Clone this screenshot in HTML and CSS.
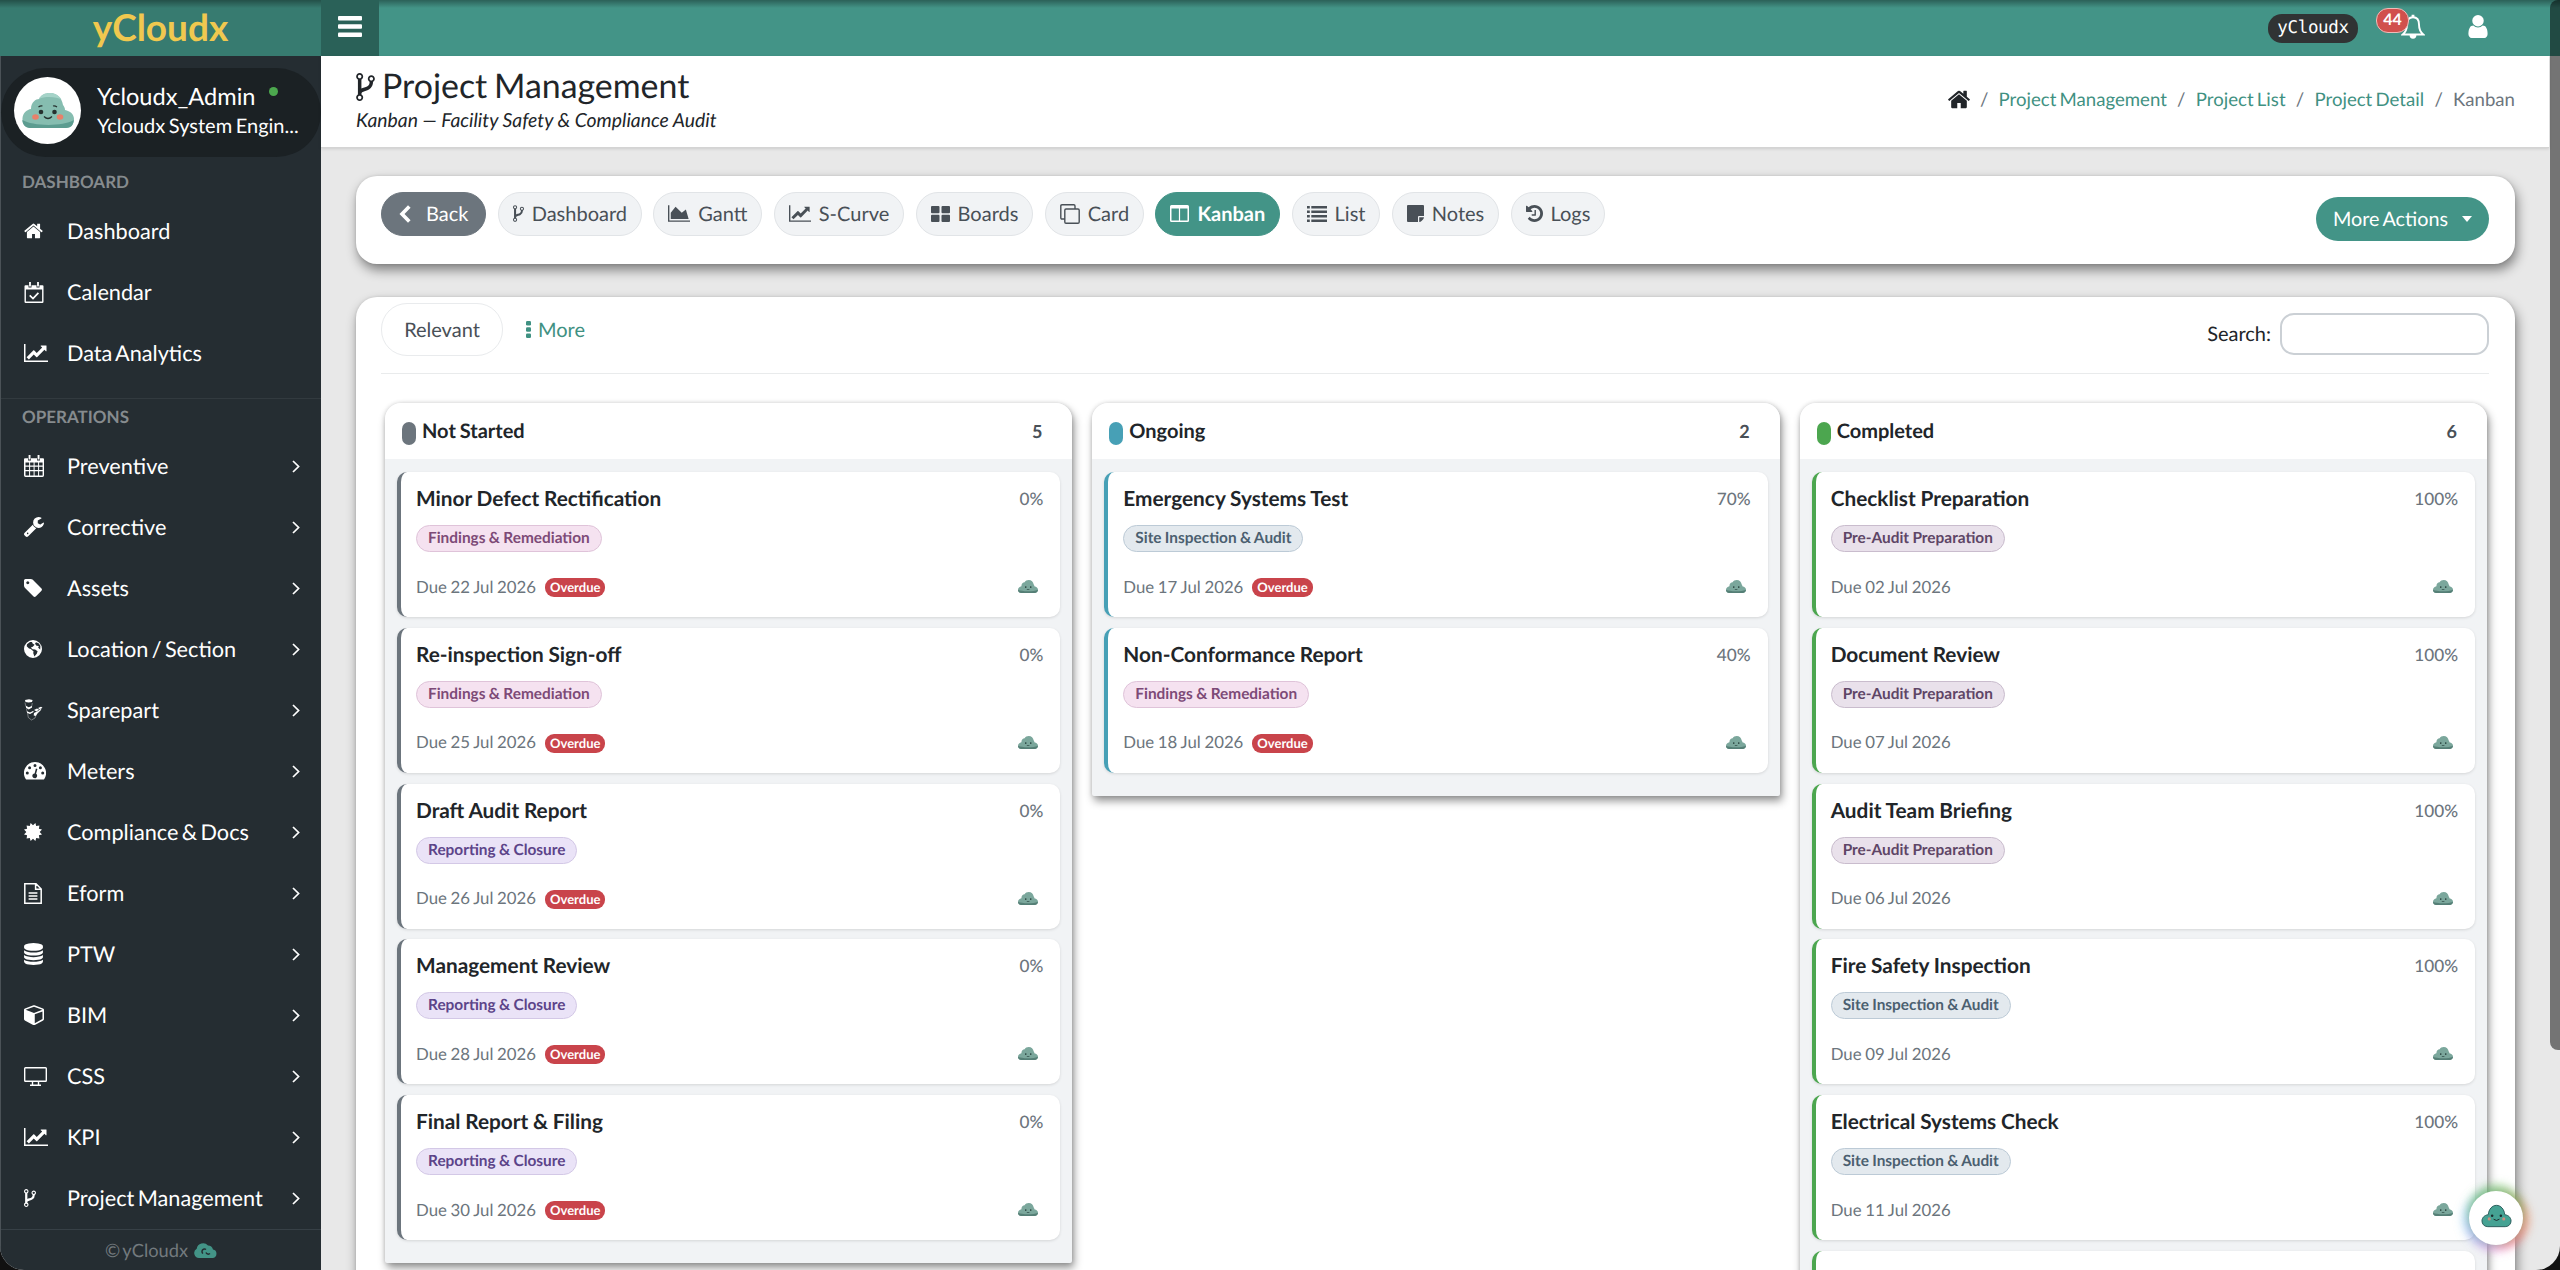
FILE: index.html
```html
<!DOCTYPE html>
<html lang="en">
  <head>
    <meta charset="UTF-8" />
    <title>Project Management - Kanban</title>
    <link rel="stylesheet" href="styles.css">
  </head>
  <body>
    <!-- icon set -->
    <svg class="sprite">
      <symbol id="i-home" viewBox="96 200 1600 1400"><path d="M1472 992v480q0 26-19 45t-45 19h-384v-384h-256v384h-384q-26 0-45-19t-19-45v-480q0-1 .5-3t.5-3l575-474 575 474q1 2 1 6zm223-69l-62 74q-8 9-21 11h-3q-13 0-21-7l-692-577-692 577q-12 8-24 7-13-2-21-11l-62-74q-8-10-7-23.5t11-21.5l719-599q32-26 76-26t76 26l244 204v-195q0-14 9-23t23-9h192q14 0 23 9t9 23v408l219 182q10 8 11 21.5t-7 23.5z"/></symbol>
      <symbol id="i-line" viewBox="0 128 2048 1536"><path d="M2048 1536v128h-2048v-1536h128v1408h1920zm-128-1248v435q0 21-19.5 29.5t-35.5-7.5l-121-121-633 633q-10 10-23 10t-23-10l-233-233-416 416-192-192 585-585q10-10 23-10t23 10l233 233 464-464-121-121q-16-16-7.5-35.5t29.5-19.5h435q14 0 23 9t9 23z"/></symbol>
      <symbol id="i-area" viewBox="0 128 2048 1536"><path d="M2048 1536v128h-2048v-1536h128v1408h1920zm-384-1024l256 896h-1664v-576l448-576 576 576z"/></symbol>
      <symbol id="i-fork" viewBox="384 128 1024 1536"><path d="M672 1472q0-40-28-68t-68-28-68 28-28 68 28 68 68 28 68-28 28-68zm0-1152q0-40-28-68t-68-28-68 28-28 68 28 68 68 28 68-28 28-68zm640 128q0-40-28-68t-68-28-68 28-28 68 28 68 68 28 68-28 28-68zm96 0q0 52-26 96.5t-70 69.5q-2 287-226 414-67 38-203 81-128 40-169.5 71t-41.500 100v26q44 25 70 69.5t26 96.5q0 80-56 136t-136 56-136-56-56-136q0-52 26-96.5t70-69.5v-820q-44-25-70-69.5t-26-96.5q0-80 56-136t136-56 136 56 56 136q0 52-26 96.5t-70 69.5v497q54-26 154-57 55-17 87.5-29.5t70.5-31 59-39.5 40.5-51 28-69.5 8.5-91.5q-44-25-70-69.5t-26-96.5q0-80 56-136t136-56 136 56 56 136z"/></symbol>
      <symbol id="i-user" viewBox="256 128 1280 1536"><path d="M1536 1399q0 109-62.5 187t-150.5 78h-854q-88 0-150.5-78t-62.5-187q0-85 8.5-160.5t31.5-152 58.5-131 94-89 134.5-34.5q131 128 313 128t313-128q76 0 134.5 34.5t94 89 58.5 131 31.5 152 8.5 160.5zm-256-887q0 159-112.5 271.5t-271.5 112.5-271.5-112.5-112.5-271.5 112.5-271.5 271.5-112.5 271.5 112.5 112.5 271.5z"/></symbol>
      <symbol id="i-database" viewBox="128 0 1536 1792"><path d="M896 768q237 0 443-43t325-127v170q0 69-103 128t-280 93.5-385 34.5-385-34.5-280-93.5-103-128v-170q119 84 325 127t443 43zm0 768q237 0 443-43t325-127v170q0 69-103 128t-280 93.5-385 34.5-385-34.5-280-93.5-103-128v-170q119 84 325 127t443 43zm0-384q237 0 443-43t325-127v170q0 69-103 128t-280 93.5-385 34.5-385-34.5-280-93.5-103-128v-170q119 84 325 127t443 43zm0-1152q208 0 385 34.5t280 93.5 103 128v128q0 69-103 128t-280 93.5-385 34.5-385-34.5-280-93.5-103-128v-128q0-69 103-128t280-93.5 385-34.5z"/></symbol>
      <symbol id="i-cube" viewBox="0 110 1664 1660"><path d="M896 1629l640-349v-636l-640 233v752zm-64-865l698-254-698-254-698 254zm832-252v768q0 35-18 65t-49 47l-704 384q-28 16-61 16t-61-16l-704-384q-31-17-49-47t-18-65v-768q0-40 23-73t61-47l704-256q22-8 44-8t44 8l704 256q38 14 61 47t23 73z"/></symbol>
      <symbol id="i-tag" viewBox="128 128 1520 1520"><path d="M576 448q0-53-37.5-90.5t-90.5-37.5-90.5 37.5-37.5 90.5 37.5 90.5 90.5 37.5 90.5-37.5 37.5-90.5zm1067 576q0 53-37 90l-491 492q-39 37-91 37-53 0-90-37l-715-716q-38-37-64.5-101t-26.5-117v-416q0-52 38-90t90-38h416q53 0 117 26.5t102 64.5l715 714q37 39 37 91z"/></symbol>
      <symbol id="i-wrench" viewBox="84 128 1644 1644"><path d="M448 1472q0-26-19-45t-45-19-45 19-19 45 19 45 45 19 45-19 19-45zm644-420l-682 682q-37 37-90 37-52 0-91-37l-106-108q-38-36-38-90 0-53 38-91l681-681q39 98 114.5 173.5t173.5 114.5zm634-435q0 39-23 106-47 134-164.5 217.5t-258.5 83.5q-185 0-316.5-131.5t-131.5-316.5 131.5-316.5 316.5-131.5q58 0 121.5 16.5t107.5 46.5q16 11 16 28t-16 28l-293 169v224l193 107q5-3 79-48.5t135.5-81 70.5-35.5q15 0 23.5 10t8.5 25z"/></symbol>
      <symbol id="i-history" viewBox="128 128 1536 1536"><path d="M1664 896q0 156-61 298t-164 245-245 164-298 61q-172 0-327-72.5t-264-204.5q-7-10-6.5-22.5t8.5-20.5l137-138q10-9 25-9 16 2 23 12 73 95 179 147t225 52q104 0 198.5-40.5t163.5-109.5 109.5-163.5 40.5-198.5-40.5-198.5-109.5-163.5-163.5-109.5-198.5-40.5q-98 0-188 35.5t-160 101.5l137 138q31 30 14 69-17 40-59 40h-448q-26 0-45-19t-19-45v-448q0-42 40-59 39-17 69 14l130 129q107-101 244.5-156.5t284.5-55.5q156 0 298 61t245 164 164 245 61 298zm-640-288v448q0 14-9 23t-23 9h-320q-14 0-23-9t-9-23v-64q0-14 9-23t23-9h224v-352q0-14 9-23t23-9h64q14 0 23 9t9 23z"/></symbol>
      <symbol id="i-calcheck" viewBox="0 0 19 21"><path d="M1 3.200h3v2.300h3V3.200h5v2.300h3V3.200h3q1 0 1 1v15.600q0 1.200-1.200 1.200H1.200Q0 21 0 19.800V4.200q0-1 1-1zM1.400 7.600v12h16.200v-12zM4.600 0h1.800v4.600H4.600zM12.600 0h1.800v4.600h-1.800z" fill-rule="evenodd"/><path d="M5.200 13.300l3.300 3.300 5.400-5.800" fill="none" stroke="currentColor" stroke-width="1.700"/></symbol>
      <symbol id="i-calendar" viewBox="0 0 20 22"><path d="M1 3.200h3v2.300h3V3.200h6v2.300h3V3.200h3q1 0 1 1v16q0 1.800-1.500 1.800h-17Q0 22 0 20.200v-16q0-1 1-1zM1.500 7.600v3h3.600v-3zm4.600 0v3h3.500v-3zm4.500 0v3h3.500v-3zm4.500 0v3h3.500v-3zM1.500 11.700v3.200h3.600v-3.200zm4.600 0v3.200h3.500v-3.200zm4.500 0v3.200h3.500v-3.200zm4.500 0v3.200h3.500v-3.200zM1.500 16.200v4.200h3.600v-4.200zm4.600 0v4.200h3.500v-4.200zm4.500 0v4.200h3.500v-4.200zm4.500 0v4.200h3.500v-4.200z" fill-rule="evenodd"/><path d="M4.600 0h1.900v4.600H4.600zM13.600 0h1.900v4.600h-1.900z"/></symbol>
      <symbol id="i-globe" viewBox="0 0 18 18"><path fill-rule="evenodd" d="M9 0a9 9 0 1 1 0 18A9 9 0 0 1 9 0zM6 2L3 4.300 2.700 6.200 5 8.500l1.800.4 2.800 2.500-.4 1.600 1.200 3.400 2.400-2.600.8-2.600-2.500-1.800-2.600-.2L6.800 7.600l2-.8 1.800-2.100L8.600 3.400 8 2zM12 2.200l-1 1.500 1.500 2 2.300.3-.6 1.800 2 1.600.2-3.600-1.800-2.500z"/></symbol>
      <symbol id="i-cubes" viewBox="0 0 19 22"><path d="M1 1l4-.8 3.600.8-.6 2-3.500.6L1.500 3zM10 11l3-1.600 2 1.200-2.500 1.800zM14 9l3-1.300 1.500 1-3 1.600z"/><path d="M1 3.500l.8 4 2.700 2 3-1.500.8-4M2.500 9.500l.5 3.600 3 1.500 3-1.800M3.500 14l.8 4.500 3.200 2.500 3.500-2 1.500-4 4-3.500.8-3" fill="none" stroke="currentColor" stroke-width=".7" opacity=".55"/><path d="M2 6.800l2.600 1.500L8 6.900v1.600l-3.300 2L2 8.700zM3 12.300l3 1.200 3.500-1.800V13L6 15l-3-1.300zM10 14l4-2 3-2.500-.3 1.500-3 3-2 3-2-.5z"/></symbol>
      <symbol id="i-gauge" viewBox="0 0 22 18"><path fill-rule="evenodd" d="M11 0a11 11 0 0 1 9.300 16.900q-.4.700-1.100.7H2.800q-.7 0-1.100-.7A11 11 0 0 1 11 0zM3.300 9.500a1.500 1.500 0 1 0 0 3 1.500 1.500 0 0 0 0-3zm2.300-5.300a1.500 1.500 0 1 0 0 3 1.500 1.500 0 0 0 0-3zM11 1.900a1.500 1.500 0 1 0 0 3 1.500 1.500 0 0 0 0-3zm5.400 2.300a1.500 1.500 0 1 0 0 3 1.500 1.500 0 0 0 0-3zm2.300 5.300a1.500 1.500 0 1 0 0 3 1.500 1.500 0 0 0 0-3zM11.900 6.400l-1.300 5a2.400 2.400 0 1 0 1.500.4l1.300-4.900z"/></symbol>
      <symbol id="i-cert" viewBox="0 0 18 18"><path d="M9 2.300L11.400 0l.8 3.100L15.400 2.600l-.5 3.200 3.100.8L15.700 9l2.300 2.400-3.100.8.5 3.200-3.200-.5-.8 3.100L9 15.700 6.600 18l-.8-3.100-3.200.5.5-3.200L0 11.400 2.300 9 0 6.600l3.100-.8-.5-3.200 3.200.5L6.600 0z"/></symbol>
      <symbol id="i-file" viewBox="0 0 18 21"><path d="M1.700.8H12l5.200 5.200v14.200H.8V.8zM11.600 1v5.300h5.500M4.600 10h8.800M4.600 13h8.800M4.600 16h8.800" fill="none" stroke="currentColor" stroke-width="1.500"/></symbol>
      <symbol id="i-desktop" viewBox="0 0 23 19"><path d="M1.500.7h20q.8 0 .8.800v12q0 .8-.8.800h-20q-.8 0-.8-.8v-12q0-.8.800-.8zM8.500 14.500v3M14.500 14.500v3M6 18.200h11" fill="none" stroke="currentColor" stroke-width="1.400"/></symbol>
      <symbol id="i-thlarge" viewBox="0 0 19 16"><path d="M1 0h6.500q1 0 1 1v5.200q0 1-1 1H1q-1 0-1-1V1q0-1 1-1zM11.500 0H18q1 0 1 1v5.200q0 1-1 1h-6.500q-1 0-1-1V1q0-1 1-1zM1 8.800h6.500q1 0 1 1V15q0 1-1 1H1q-1 0-1-1V9.800q0-1 1-1zM11.500 8.800H18q1 0 1 1V15q0 1-1 1h-6.500q-1 0-1-1V9.800q0-1 1-1z"/></symbol>
      <symbol id="i-clone" viewBox="0 0 20 20"><path d="M6 5h12q1.200 0 1.200 1.200v11.800q0 1.200-1.200 1.200H6q-1.200 0-1.200-1.200V6.200Q4.800 5 6 5zM4.500 15H2Q.8 15 .8 13.800V2Q.8.800 2 .8h11.800Q15 .8 15 2v2.800" fill="none" stroke="currentColor" stroke-width="1.400"/></symbol>
      <symbol id="i-columns" viewBox="0 0 19 17"><path d="M1.500 0h16Q19 0 19 1.500v14q0 1.500-1.500 1.500h-16Q0 17 0 15.500v-14Q0 0 1.500 0zm0 3.400v12.200h7.400V3.400zm8.600 0v12.200h7.400V3.400z" fill-rule="evenodd"/></symbol>
      <symbol id="i-list" viewBox="0 0 20 16"><path d="M0 0h2.800v2.500H0zM4.300 0H20v2.500H4.300zM0 4.500h2.800V7H0zM4.300 4.500H20V7H4.300zM0 9h2.800v2.500H0zM4.300 9H20v2.500H4.300zM0 13.500h2.800V16H0zM4.300 13.500H20V16H4.300z"/></symbol>
      <symbol id="i-note" viewBox="0 0 17 17"><path d="M1 0h15q1 0 1 1v10h-5q-1 0-1 1v5H1q-1 0-1-1V1q0-1 1-1zM12.200 12.300H17q-.2 1.500-1 2.300l-1.500 1.500q-.8.800-2.300.9z"/></symbol>
      <symbol id="i-bars" viewBox="0 0 24 21"><rect width="24" height="4.400" rx="1"/><rect y="8.300" width="24" height="4.400" rx="1"/><rect y="16.600" width="24" height="4.400" rx="1"/></symbol>
      <symbol id="i-bell" viewBox="0 0 24 26"><path d="M12 3.200c4.500 0 6 3.600 6 7.300 0 4.500 1.300 7.500 4.300 10H1.700c3-2.500 4.300-5.500 4.300-10 0-3.700 1.500-7.300 6-7.300z" fill="none" stroke="currentColor" stroke-width="1.900"/><path d="M10.600.8h2.800V3h-2.800zM8.600 21h6.800a3.400 3.800 0 0 1-6.800 0z"/></symbol>
      <symbol id="i-left" viewBox="0 0 12 18"><path d="M10.300 1.500L3 9l7.300 7.500" fill="none" stroke="currentColor" stroke-width="3.600"/></symbol>
      <symbol id="i-right" viewBox="0 0 8 13"><path d="M1 1l5.600 5.500L1 12" fill="none" stroke="currentColor" stroke-width="1.700"/></symbol>
      <symbol id="i-dots" viewBox="0 0 5 17"><rect width="5" height="4.500" rx="1.200"/><rect y="6.200" width="5" height="4.500" rx="1.200"/><rect y="12.400" width="5" height="4.500" rx="1.200"/></symbol>
      <symbol id="i-caret" viewBox="0 0 10 6"><path d="M0 0h10L5 6z"/></symbol>
      <symbol id="i-cloudlogo" viewBox="0 0 23 15"><path d="M5 15a5 5 0 0 1-2.300-9.300A6.500 6.500 0 0 1 14 2.500 5.500 5.500 0 0 1 19 6.500a4.300 4.300 0 0 1-.5 8.500z"/><path d="M9 10.500a2.500 2.500 0 0 1 3-4M12 9.500a2.500 2.500 0 0 0 4 1" fill="none" stroke="#252d32" stroke-width="1.500"/></symbol>
      <symbol id="i-mascot" viewBox="0 0 52 35">
        <path d="M10 35C3 35 0 30 .5 25S5 16.500 9 16C9 9 14 6 17 6 19 2 23 0 28 0c7 0 12 5 13 12 1 1 2 3 2 5 5 1 9 4 9 9s-3 9-9 9z" fill="#86bdb0"/>
        <path d="M8 35C3 35 .3 31 .4 27 10 33 40 34 51.800 27 51.500 32 49 35 44 35z" fill="#5c9c90"/>
        <path d="M17 6C19 2 23 0 28 0c5 0 9 2.500 11.500 6.500C35 3.500 22 3 17 6z" fill="#a5d3c8"/>
        <circle cx="19" cy="19" r="2.300" fill="#26312f"/><circle cx="32.500" cy="19" r="2.300" fill="#26312f"/>
        <ellipse cx="13.500" cy="24" rx="3.300" ry="2.700" fill="#e8806a"/><ellipse cx="38" cy="24" rx="3.300" ry="2.700" fill="#e8806a"/>
        <path d="M22 23.500q4 4 8 0M16.500 14q2-1.500 4-1M31 13q2-.5 4 1" fill="none" stroke="#26312f" stroke-width="1.200"/>
      </symbol>
      <symbol id="i-mini" viewBox="0 0 20 13">
        <path d="M3.500 13C1 13 0 11.400 0 9.700S1.600 6.400 3.400 6.200C3.400 3.500 5 2.300 6.600 2.300 7.400.8 8.900 0 10.800 0c2.600 0 4.500 1.800 4.900 4.500.4.400.7 1.100.7 1.800 2 .4 3.600 1.600 3.600 3.500s-1.300 3.200-3.600 3.200z" fill="#7ba79c"/>
        <path d="M3.500 13C1 13 0 11.400 0 9.700c4 1.900 15 2.100 20 0-.1 1.900-1.300 3.300-3.600 3.300z" fill="#557f76"/>
        <path d="M7 6.200h1.400v1.700H7zM12 6.200h1.400v1.700H12zM8.800 9h2.600v.8H8.800z" fill="#35524c"/>
      </symbol>
      <symbol id="i-bot" viewBox="0 0 32 24">
        <path d="M7 23C3 23 1 20 1 17s2.500-6 6.500-6.300C8 5 11.500 1 16 1s8 4 8.500 9.700C28.500 11 31 14 31 17s-2 6-6 6z" fill="#45a293" stroke="#2b5d5c" stroke-width="1"/>
        <circle cx="11.500" cy="11.800" r="1.300" fill="#1c2b2c"/><circle cx="20.500" cy="11.800" r="1.300" fill="#1c2b2c"/>
        <circle cx="8.500" cy="15" r="1.600" fill="#c98f80"/><circle cx="23.500" cy="15" r="1.600" fill="#c98f80"/>
        <path d="M13 15.300q3 2.600 6 0" fill="none" stroke="#1c2b2c" stroke-width="1"/>
      </symbol>
    </svg>

    <div class="app">
      <header class="topbar">
        <div class="brand">yCloudx</div>
        <button class="toggle"><svg class="ic-bars"><use href="#i-bars"/></svg></button>
        <div class="topbar-right">
          <span class="tenant">yCloudx</span>
          <span class="bell"><svg><use href="#i-bell"/></svg><b class="bell-count">44</b></span>
          <svg class="ic-user"><use href="#i-user"/></svg>
        </div>
      </header>

      <div class="wrapper">
        <aside class="sidebar">
          <div class="user-panel">
            <div class="avatar"><svg><use href="#i-mascot"/></svg></div>
            <div class="user-info">
              <p class="user-name">Ycloudx_Admin <i class="online"></i></p>
              <p class="user-role">Ycloudx System Engin...</p>
            </div>
          </div>
          <h4 class="nav-title">DASHBOARD</h4>
          <ul class="nav" id="navDashboard"></ul>
          <h4 class="nav-title ops">OPERATIONS</h4>
          <ul class="nav" id="navOperations"></ul>
          <footer class="sidebar-footer"><span>© yCloudx</span><svg><use href="#i-cloudlogo"/></svg></footer>
        </aside>

        <main class="content">
          <div class="content-header">
            <div>
              <h1><svg><use href="#i-fork"/></svg>Project Management</h1>
              <p class="subtitle">Kanban — Facility Safety &amp; Compliance Audit</p>
            </div>
            <nav class="breadcrumb">
              <svg><use href="#i-home"/></svg><i>/</i><a>Project Management</a><i>/</i><a>Project List</a><i>/</i><a>Project Detail</a><i>/</i><span>Kanban</span>
            </nav>
          </div>

          <section class="panel toolbar">
            <div class="tabs" id="tabs"></div>
            <button class="more-actions">More Actions <svg><use href="#i-caret"/></svg></button>
          </section>

          <section class="panel board-panel">
            <div class="filter-row">
              <button class="relevant">Relevant</button>
              <a class="more"><svg><use href="#i-dots"/></svg>More</a>
              <label class="search">Search: <input type="text"></label>
            </div>
            <div class="board" id="board"></div>
          </section>
        </main>
      </div>

      <div class="scroll-thumb"></div>
      <button class="fab"><svg><use href="#i-bot"/></svg></button>
    </div>

    <script>
      // [icon, width, height, label]
      const dashboardNav = [
        ["home", 19, 16, "Dashboard"],
        ["calcheck", 20, 21, "Calendar"],
        ["line", 24, 18, "Data Analytics"],
      ];
      const operationsNav = [
        ["calendar", 20, 22, "Preventive"],
        ["wrench", 20, 20, "Corrective"],
        ["tag", 18, 18, "Assets"],
        ["globe", 18, 18, "Location / Section"],
        ["cubes", 19, 22, "Sparepart"],
        ["gauge", 22, 18, "Meters"],
        ["cert", 18, 18, "Compliance & Docs"],
        ["file", 18, 21, "Eform"],
        ["database", 19, 22, "PTW"],
        ["cube", 20, 20, "BIM"],
        ["desktop", 23, 19, "CSS"],
        ["line", 24, 18, "KPI"],
        ["fork", 12, 18, "Project Management"],
      ];
      const tabs = [
        ["left", 12, 18, "Back", "back"],
        ["fork", 11, 17, "Dashboard"],
        ["area", 22, 17, "Gantt"],
        ["line", 22, 17, "S-Curve"],
        ["thlarge", 19, 16, "Boards"],
        ["clone", 20, 20, "Card"],
        ["columns", 19, 17, "Kanban", "active"],
        ["list", 20, 16, "List"],
        ["note", 17, 17, "Notes"],
        ["history", 17, 17, "Logs"],
      ];
      const FIND = ["Findings & Remediation", "find"];
      const REPORT = ["Reporting & Closure", "report"];
      const SITE = ["Site Inspection & Audit", "site"];
      const PRE = ["Pre-Audit Preparation", "pre"];

      const columns = [
        {
          name: "Not Started", cls: "grey", overdue: true,
          cards: [
            ["Minor Defect Rectification", FIND, "22 Jul 2026", 0],
            ["Re-inspection Sign-off", FIND, "25 Jul 2026", 0],
            ["Draft Audit Report", REPORT, "26 Jul 2026", 0],
            ["Management Review", REPORT, "28 Jul 2026", 0],
            ["Final Report & Filing", REPORT, "30 Jul 2026", 0],
          ],
        },
        {
          name: "Ongoing", cls: "blue", overdue: true,
          cards: [
            ["Emergency Systems Test", SITE, "17 Jul 2026", 70],
            ["Non-Conformance Report", FIND, "18 Jul 2026", 40],
          ],
        },
        {
          name: "Completed", cls: "green", overdue: false,
          cards: [
            ["Checklist Preparation", PRE, "02 Jul 2026", 100],
            ["Document Review", PRE, "07 Jul 2026", 100],
            ["Audit Team Briefing", PRE, "06 Jul 2026", 100],
            ["Fire Safety Inspection", SITE, "09 Jul 2026", 100],
            ["Electrical Systems Check", SITE, "11 Jul 2026", 100],
            null,
          ],
        },
      ];

      const esc = (s) => s.replace(/&/g, "&amp;");
      const icon = (id, w, h) =>
        `<svg width="${w}" height="${h}"><use href="#i-${id}"/></svg>`;

      function renderNav(id, items, arrow) {
        document.getElementById(id).innerHTML = items
          .map(
            ([ic, w, h, label]) => `
          <li><span class="nav-icon">${icon(ic, w, h)}</span>${esc(label)}
          ${arrow ? `<span class="arrow">${icon("right", 8, 13)}</span>` : ""}</li>`
          )
          .join("");
      }

      function renderCard(card, overdue) {
        if (!card) return `<article class="card"></article>`;
        const [title, [tag, tagCls], due, pct] = card;
        return `
          <article class="card">
            <div class="card-top"><h3>${esc(title)}</h3><span class="pct">${pct}%</span></div>
            <span class="tag ${tagCls}">${esc(tag)}</span>
            <div class="card-bottom">
              <span>Due ${due}</span>
              ${overdue ? `<b class="overdue">Overdue</b>` : ""}
              <svg class="assignee"><use href="#i-mini"/></svg>
            </div>
          </article>`;
      }

      renderNav("navDashboard", dashboardNav, false);
      renderNav("navOperations", operationsNav, true);

      document.getElementById("tabs").innerHTML = tabs
        .map(
          ([ic, w, h, label, cls = ""]) =>
            `<button class="tab ${cls}">${icon(ic, w, h)}<span>${label}</span></button>`
        )
        .join("");

      document.getElementById("board").innerHTML = columns
        .map(
          (c) => `
        <div class="column ${c.cls}">
          <div class="column-head"><i class="dot"></i>${c.name}<span class="count">${c.cards.length}</span></div>
          <div class="column-body">${c.cards.map((k) => renderCard(k, c.overdue)).join("")}</div>
        </div>`
        )
        .join("");
    </script>
  </body>
</html>
```
FILE: styles.css
```css
* {
  box-sizing: border-box;
}

body {
  margin: 0;
  background: #111;
  font-family: Lato, "Liberation Sans", sans-serif;
  color: #212529;
  text-rendering: geometricPrecision;
}

h1, h3, h4, p, ul {
  margin: 0;
  padding: 0;
  font-weight: normal;
}

button, input {
  font-family: inherit;
  text-rendering: inherit;
  border: 0;
}

svg {
  display: block;
  flex: none;
  fill: currentColor;
}

.sprite {
  position: absolute;
  width: 0;
  height: 0;
}

.app {
  position: relative;
  width: 100%;
  height: 1270px;
  overflow: hidden;
  display: flex;
  flex-direction: column;
  border-radius: 0 0 24px 24px;
  background: #e8e8e8;
}

/* top bar */
.topbar {
  display: flex;
  flex: none;
  height: 56px;
  background: linear-gradient(rgba(0, 0, 0, 0.35), transparent 8px) #439487;
  color: #fff;
}

.brand {
  width: 321px;
  background: rgba(0, 0, 0, 0.17);
  color: #f0c84f;
  font-size: 37px;
  font-weight: bold;
  line-height: 53px;
  text-align: center;
}

.toggle {
  display: flex;
  justify-content: center;
  padding: 16px 0 0;
  width: 58px;
  background: #2a6158;
  color: #fff;
}

.ic-bars {
  width: 24px;
  height: 21px;
}

.topbar-right {
  display: flex;
  align-items: center;
  margin-left: auto;
  padding-right: 72px;
}

.tenant {
  width: 90px;
  height: 29px;
  border-radius: 14px;
  background: #303334;
  font: 17.5px/28px "DejaVu Sans Mono", monospace;
  letter-spacing: -0.3px;
  text-align: center;
}

.bell {
  position: relative;
  margin: -2px 43px 0 43px;
}

.bell svg {
  width: 24px;
  height: 26px;
}

.bell-count {
  position: absolute;
  left: -25px;
  top: -6px;
  width: 33px;
  height: 25px;
  border: 1px solid #eebcb9;
  border-radius: 12px;
  background: #d1504d;
  font-size: 16px;
  line-height: 22px;
  text-align: center;
}

.ic-user {
  width: 20px;
  height: 23px;
  margin-top: -3px;
}

.wrapper {
  display: flex;
  flex: 1;
  min-height: 0;
}

/* sidebar */
.sidebar {
  display: flex;
  flex-direction: column;
  flex: none;
  width: 321px;
  background: #252d32;
  border-left: 1px solid #4b5257;
  color: #fff;
}

.user-panel {
  display: flex;
  flex: none;
  align-items: center;
  height: 89px;
  margin-top: 12px;
  padding-left: 13px;
  border-radius: 45px;
  background: #1b2124;
}

.avatar {
  display: flex;
  align-items: center;
  justify-content: center;
  width: 67px;
  height: 67px;
  margin-top: -5px;
  border-radius: 50%;
  background: #fff;
}

.avatar svg {
  width: 52px;
  height: 35px;
}

.user-info {
  margin: -4px 0 0 16px;
}

.user-name {
  display: flex;
  font-size: 23.6px;
  line-height: 30px;
}

.online {
  width: 9px;
  height: 9px;
  margin: 5px 0 0 14px;
  border-radius: 50%;
  background: #4ca84e;
}

.user-role {
  font-size: 20px;
  line-height: 28px;
  word-spacing: -1.5px;
}

.nav-title {
  height: 44px;
  padding-left: 21px;
  color: #868b8e;
  font-size: 17px;
  font-weight: bold;
  line-height: 49px;
}

.nav-title.ops {
  height: 38px;
  margin-top: 14px;
  border-top: 1px solid #323a3f;
  line-height: 35px;
}

.nav {
  list-style: none;
}

.nav li {
  display: flex;
  align-items: center;
  height: 61px;
  padding: 0 21px 1px 23px;
  font-size: 21.7px;
  word-spacing: -2.2px;
}

.nav-icon {
  width: 43px;
}

.arrow {
  margin-left: auto;
}

.sidebar-footer {
  display: flex;
  flex: 1;
  align-items: center;
  justify-content: center;
  gap: 6px;
  border-top: 1px solid #374046;
  color: #737a7e;
  font-size: 18.3px;
  word-spacing: -2px;
}

.sidebar-footer svg {
  width: 23px;
  height: 15px;
  color: #439487;
}

/* content header */
.content {
  flex: 1;
  min-width: 0;
  padding-right: 45px;
}

.content-header {
  display: flex;
  justify-content: space-between;
  height: 92px;
  margin-right: -34px;
  padding: 9px 34px 0 35px;
  border-bottom: 1px solid #d4d4d4;
  background: #fff;
  box-shadow: 0 1px 3px rgba(0, 0, 0, 0.12);
}

h1 {
  display: flex;
  align-items: center;
  gap: 7px;
  font-size: 33.9px;
  line-height: 43px;
  word-spacing: -2px;
}

h1 svg {
  width: 19px;
  height: 28px;
}

.subtitle {
  font-size: 19.35px;
  font-style: italic;
  line-height: 26px;
}

.breadcrumb {
  display: flex;
  align-items: center;
  height: 68px;
  color: #6c757d;
  font-size: 18.6px;
  word-spacing: -1.5px;
}

.breadcrumb svg {
  width: 22px;
  height: 19px;
  color: #212529;
}

.breadcrumb i {
  width: 29px;
  text-align: center;
  font-style: normal;
}

.breadcrumb a,
.more {
  color: #3f9182;
}

/* panels */
.panel {
  margin-left: 35px;
  border-radius: 21px;
  background: #fff;
  box-shadow: 2px 6px 12px rgba(0, 0, 0, 0.45), 0 0 3px rgba(0, 0, 0, 0.12);
}

.toolbar {
  display: flex;
  justify-content: space-between;
  height: 88px;
  margin-top: 28px;
  padding: 16px 26px 16px 25px;
}

.tabs {
  display: flex;
  gap: 11.3px;
}

.tab {
  display: flex;
  align-items: center;
  gap: 8px;
  height: 44px;
  padding: 0 14px 1px;
  border: 1px solid #e1e4e7;
  border-radius: 22px;
  background: #f1f3f5;
  color: #495057;
  font-size: 20px;
}

.tab.back {
  gap: 15px;
  padding: 0 17px 1px;
  border-color: #6c757d;
  background: #6c757d;
  color: #fff;
}

.tab.active {
  border-color: #439487;
  background: #439487;
  color: #fff;
  font-weight: bold;
}

.more-actions {
  display: flex;
  align-items: center;
  gap: 14px;
  height: 44px;
  margin-top: 5px;
  padding: 0 17px 1px;
  border-radius: 22px;
  background: #439487;
  color: #fff;
  font-size: 19.8px;
  word-spacing: -1.5px;
}

.more-actions svg {
  width: 10px;
  height: 6px;
}

.board-panel {
  height: 1400px;
  margin-top: 33px;
  padding: 0 26px 0 25px;
}

.filter-row {
  display: flex;
  height: 77px;
  padding-top: 6px;
  border-bottom: 1px solid #e9ebec;
}

.relevant {
  width: 122px;
  height: 53px;
  padding: 0;
  border: 1px solid #e9ebed;
  border-radius: 26px;
  background: #fff;
  color: #495057;
  font-size: 20px;
}

.more {
  display: flex;
  align-items: center;
  gap: 7px;
  height: 53px;
  margin-left: 23px;
  font-size: 20px;
}

.more svg {
  width: 5px;
  height: 17px;
}

.search {
  display: flex;
  align-items: center;
  gap: 9px;
  height: 61px;
  margin-left: auto;
  font-size: 20px;
}

.search input {
  width: 209px;
  height: 42px;
  border: 2px solid #cbd0d5;
  border-radius: 14px;
  background: #fff;
}

/* kanban */
.board {
  display: grid;
  grid-template-columns: repeat(3, 1fr);
  align-items: start;
  gap: 20px;
  padding: 29px 2px 0 4px;
}

.column {
  border-radius: 16px 16px 2px 2px;
  background: #f1f3f5;
  box-shadow: 2px 5px 9px rgba(0, 0, 0, 0.42), 0 0 4px rgba(0, 0, 0, 0.14);
}

.column-head {
  display: flex;
  align-items: center;
  height: 56px;
  padding: 0 30px 0 17px;
  border-radius: 16px 16px 0 0;
  background: #fff;
  font-size: 20px;
  font-weight: bold;
  word-spacing: -1px;
}

.dot {
  width: 14px;
  height: 23px;
  margin: 4px 6px 0 0;
  border-radius: 7px;
  background: var(--state);
}

.count {
  margin-left: auto;
  color: #495057;
  font-size: 18px;
}

.column-body {
  display: flex;
  flex-direction: column;
  gap: 10.8px;
  padding: 13px 12px 23px;
}

.card {
  height: 145px;
  padding: 13px 17px 0 15px;
  border-left: 4px solid var(--state);
  border-radius: 10px;
  background: #fff;
  box-shadow: 0 1px 3px rgba(0, 0, 0, 0.12);
}

.card-top {
  display: flex;
  justify-content: space-between;
  line-height: 28px;
}

h3 {
  font-size: 20.8px;
  font-weight: bold;
  word-spacing: -0.3px;
}

.pct {
  color: #6c757d;
  font-size: 17.2px;
  font-weight: 500;
  line-height: 28px;
}

.tag {
  display: block;
  width: fit-content;
  height: 27px;
  margin-top: 12px;
  padding: 0 11px;
  border: 1px solid;
  border-radius: 14px;
  font-size: 15.4px;
  font-weight: bold;
  line-height: 24px;
  word-spacing: -0.4px;
}

.find {
  border-color: #dfc3d9;
  background: #f5e2f0;
  color: #7d4a77;
}

.report {
  border-color: #d3c8e6;
  background: #eae3f7;
  color: #5c4489;
}

.site {
  border-color: #bccad6;
  background: #e3e9ee;
  color: #4b5f70;
}

.pre {
  border-color: #c9bccd;
  background: #e9e1eb;
  color: #5e4566;
}

.card-bottom {
  display: flex;
  align-items: center;
  height: 24px;
  margin-top: 22px;
  padding-right: 5px;
  color: #6c757d;
  font-size: 16.8px;
  word-spacing: -0.6px;
}

.overdue {
  height: 19px;
  margin: 3px 0 0 9px;
  padding: 0 5px;
  border-radius: 9px;
  background: #c9444b;
  color: #fff;
  font-size: 13px;
  line-height: 18px;
}

.assignee {
  width: 20px;
  height: 13px;
  margin: 1px 0 0 auto;
}

.grey {
  --state: #6c757d;
}

.blue {
  --state: #47a0b6;
}

.green {
  --state: #4ca64f;
}

/* floating items */
.scroll-thumb {
  position: absolute;
  top: 0;
  right: 0;
  width: 10px;
  height: 1050px;
  border-radius: 8px 0 0 8px;
  background: rgba(0, 0, 0, 0.5);
}

.fab {
  position: absolute;
  right: 37px;
  bottom: 25px;
  display: flex;
  align-items: center;
  justify-content: center;
  width: 54px;
  height: 54px;
  padding: 0 0 4px;
  border-radius: 50%;
  background: #fff;
  box-shadow: 0 -6px 10px rgba(90, 180, 80, 0.6), -6px 1px 10px rgba(100, 190, 240, 0.5), 6px 2px 10px rgba(240, 130, 80, 0.6), 0 6px 10px rgba(230, 120, 230, 0.5);
}

.fab svg {
  width: 31px;
  height: 24px;
}
```
